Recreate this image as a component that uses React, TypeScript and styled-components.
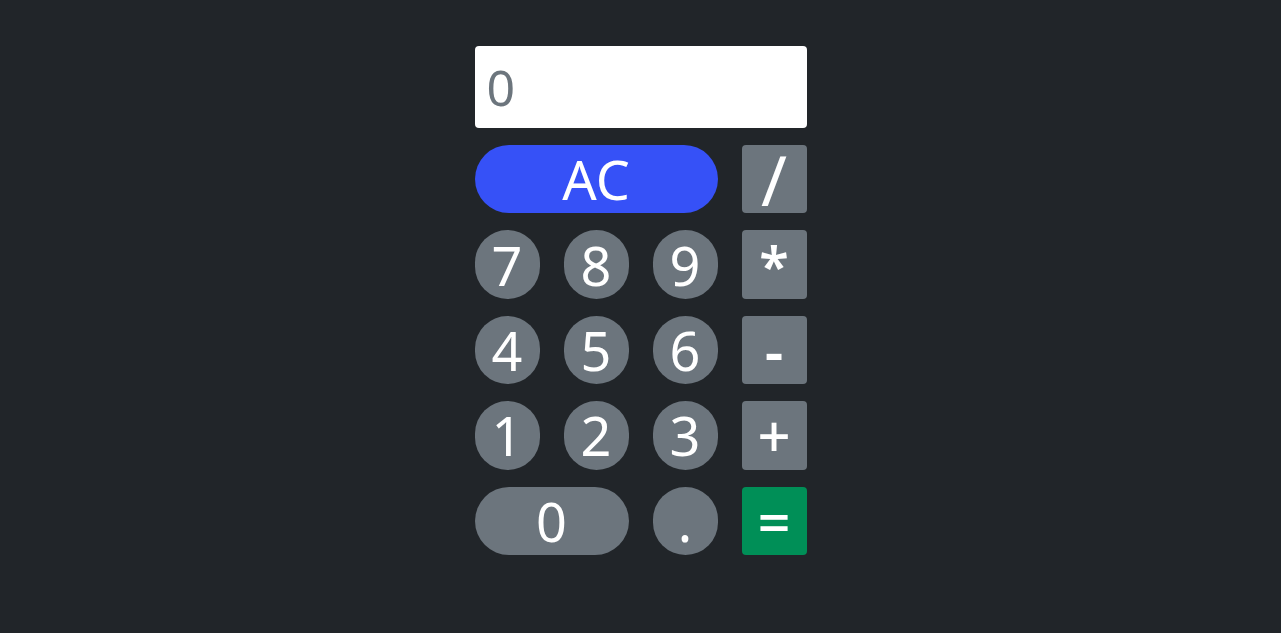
import React, { useState } from "react";
import styled, { createGlobalStyle } from "styled-components";

const Global = createGlobalStyle`
  html, body { margin: 0; padding: 0; background: #212529; }
  body { font-family: "Noto Sans", "Open Sans", sans-serif; }
`;

const Page = styled.div`
  display: flex;
  justify-content: center;
  padding-top: 46px;
  min-height: 633px;
  box-sizing: border-box;
`;

const Calculator = styled.div`
  width: 332px;
  display: flex;
  flex-direction: column;
  gap: 17px;
`;

const Display = styled.div`
  height: 82px;
  background: #ffffff;
  border-radius: 4px;
  display: flex;
  align-items: center;
  padding: 0 12px;
  box-sizing: border-box;
  color: #6c757d;
  font-size: 50px;
  line-height: 1;
`;

const Keypad = styled.div`
  display: grid;
  grid-template-columns: repeat(4, 65px);
  grid-auto-rows: 68.4px;
  column-gap: 24px;
  row-gap: 17px;
`;

type Variant = "num" | "op" | "clear" | "equals";

const Key = styled.button<{ $variant: Variant; $span?: number }>`
  grid-column: span ${(p) => p.$span ?? 1};
  border: none;
  margin: 0;
  padding: 0;
  font-family: inherit;
  font-size: 54px;
  line-height: 1;
  color: #ffffff;
  display: flex;
  align-items: center;
  justify-content: center;
  cursor: pointer;
  background: ${(p) =>
    p.$variant === "clear" ? "#3651f7" : p.$variant === "equals" ? "#008f57" : "#6c757d"};
  border-radius: ${(p) => (p.$variant === "op" || p.$variant === "equals" ? "4px" : "999px")};
`;

const Label = styled.span<{ $size?: number; $weight?: number }>`
  font-size: ${(p) => (p.$size ? `${p.$size}px` : "inherit")};
  font-weight: ${(p) => p.$weight ?? 400};
  line-height: 1;
  display: block;
`;

type K = { label: string; variant: Variant; span?: number; size?: number; weight?: number };

const keys: K[] = [
  { label: "AC", variant: "clear", span: 3 },
  { label: "/", variant: "op", size: 70 },
  { label: "7", variant: "num" },
  { label: "8", variant: "num" },
  { label: "9", variant: "num" },
  { label: "*", variant: "op", weight: 600 },
  { label: "4", variant: "num" },
  { label: "5", variant: "num" },
  { label: "6", variant: "num" },
  { label: "-", variant: "op", size: 58, weight: 600 },
  { label: "1", variant: "num" },
  { label: "2", variant: "num" },
  { label: "3", variant: "num" },
  { label: "+", variant: "op", size: 58, weight: 500 },
  { label: "0", variant: "num", span: 2 },
  { label: ".", variant: "num" },
  { label: "=", variant: "equals", size: 58, weight: 500 },
];

export default function App() {
  const [value] = useState("0");
  return (
    <>
      <Global />
      <Page>
        <Calculator>
          <Display>{value}</Display>
          <Keypad>
            {keys.map((k) => (
              <Key key={k.label} $variant={k.variant} $span={k.span}>
                <Label $size={k.size} $weight={k.weight}>
                  {k.label}
                </Label>
              </Key>
            ))}
          </Keypad>
        </Calculator>
      </Page>
    </>
  );
}
